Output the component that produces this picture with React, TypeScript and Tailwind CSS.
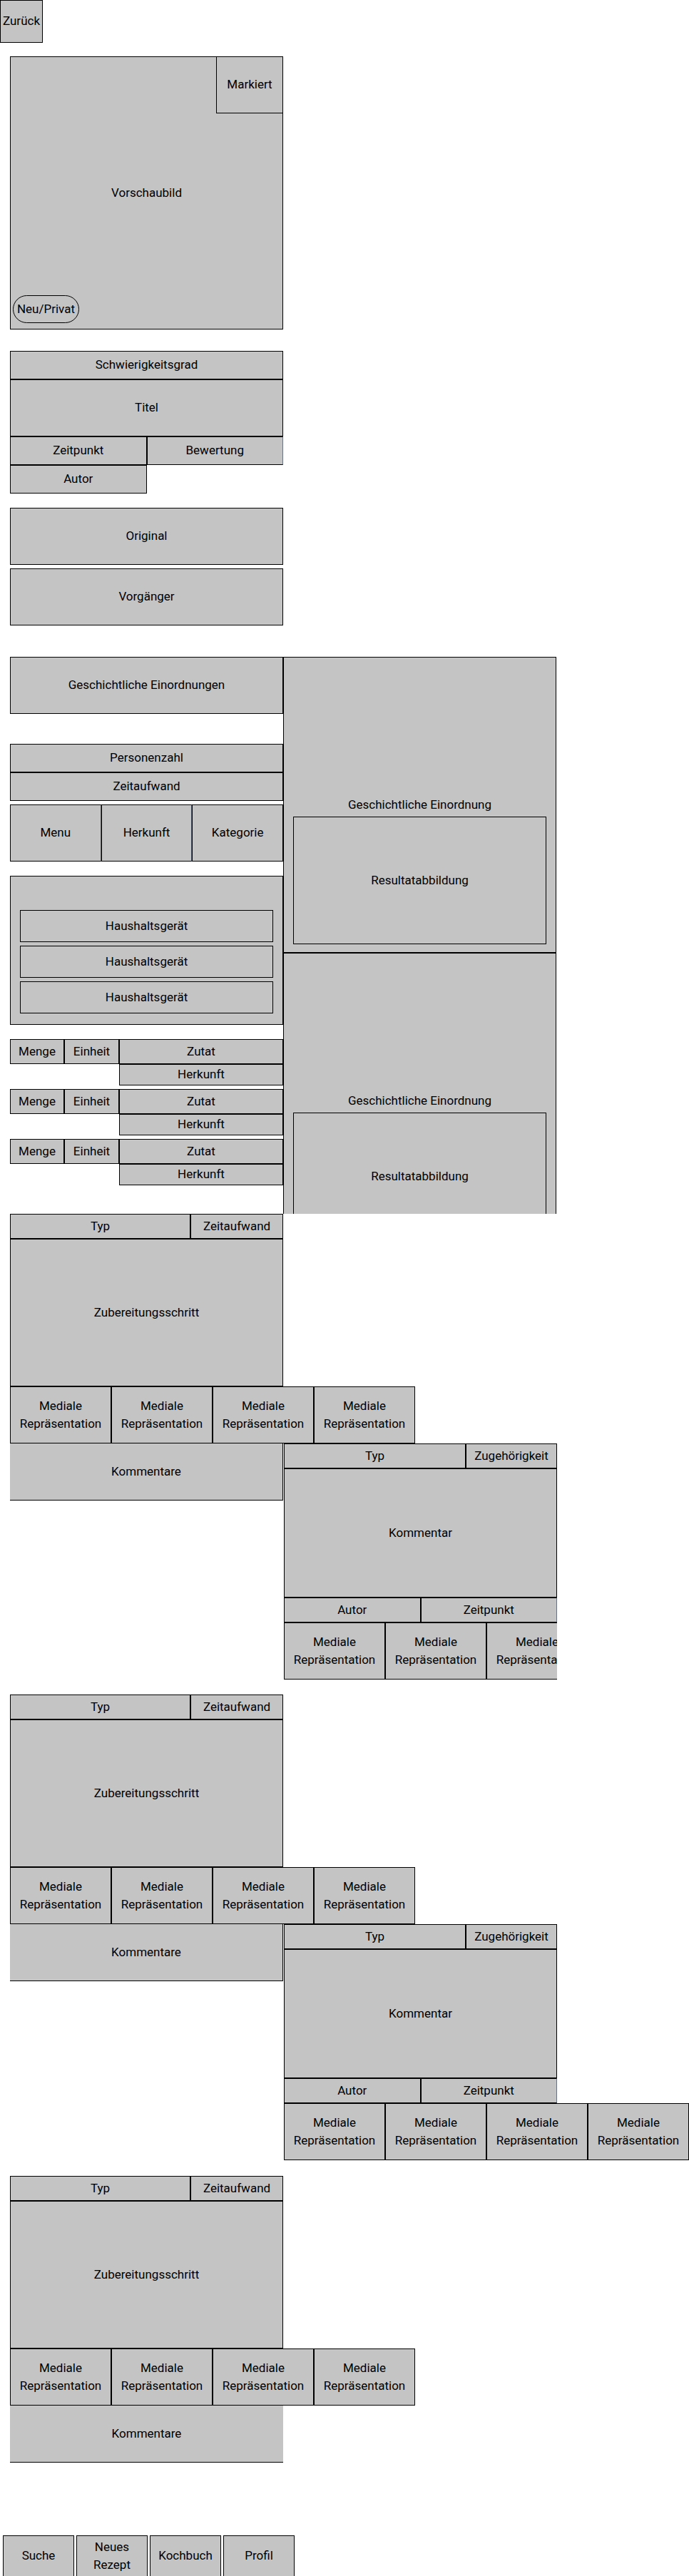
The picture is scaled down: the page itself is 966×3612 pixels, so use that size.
import type { ReactNode } from "react";
import clsx from "clsx";

// Plain grey wireframe cell with a black hairline border
function Box({ className, children }: { className?: string; children?: ReactNode }) {
  return (
    <div
      className={clsx(
        "flex shrink-0 items-center justify-center border border-black bg-[#c4c4c4] text-center",
        className
      )}
    >
      {children}
    </div>
  );
}

function Media() {
  return (
    <Box className="h-[80px] w-[142px]">
      Mediale
      <br />
      Repräsentation
    </Box>
  );
}

function MediaRow() {
  return (
    <div className="flex">
      <Media />
      <Media />
      <Media />
      <Media />
    </div>
  );
}

function History() {
  return (
    <div className="flex h-[415px] w-[383px] flex-col items-center justify-end border border-black bg-[#c4c4c4] px-[13px] pb-[11px]">
      <span className="leading-5">Geschichtliche Einordnung</span>
      <Box className="mt-[7px] h-[179px] w-full">Resultatabbildung</Box>
    </div>
  );
}

function Ingredient() {
  return (
    <div className="flex">
      <Box className="h-[35px] w-[76px]">Menge</Box>
      <Box className="h-[35px] w-[77px]">Einheit</Box>
      <div className="flex w-[230px] flex-col">
        <Box className="h-[35px]">Zutat</Box>
        <Box className="h-[30px]">Herkunft</Box>
      </div>
    </div>
  );
}

function Comment({ clip }: { clip?: boolean }) {
  return (
    <div className={clsx("ml-px w-[383px] shrink-0", clip && "overflow-hidden")}>
      <div className="flex">
        <Box className="h-[35px] w-[255px]">Typ</Box>
        <Box className="h-[35px] flex-1">Zugehörigkeit</Box>
      </div>
      <Box className="h-[181px]">Kommentar</Box>
      <div className="flex">
        <Box className="h-[35px] w-1/2">Autor</Box>
        <Box className="h-[35px] w-1/2 border-r-gray-500">Zeitpunkt</Box>
      </div>
      <MediaRow />
    </div>
  );
}

function Step({ comment, clip }: { comment?: boolean; clip?: boolean }) {
  return (
    <div>
      <div className="w-[383px]">
        <div className="flex">
          <Box className="h-[35px] w-[253px]">Typ</Box>
          <Box className="h-[35px] flex-1">Zeitaufwand</Box>
        </div>
        <Box className="h-[207px]">Zubereitungsschritt</Box>
      </div>
      <MediaRow />
      <div className="flex items-start">
        <Box className={clsx("h-[80px] w-[383px] border-l-0 border-t-0", !comment && "border-r-0")}>
          Kommentare
        </Box>
        {comment && <Comment clip={clip} />}
      </div>
    </div>
  );
}

export default function App() {
  return (
    <div className="min-h-[3612px] overflow-hidden bg-white font-['Roboto',sans-serif] text-[17px] text-black">
      <Box className="h-[60px] w-[60px]">Zurück</Box>

      <div className="px-[14px]">
        {/* Preview */}
        <div className="relative mt-[19px] flex h-[383px] w-[383px] items-center justify-center border border-black bg-[#c4c4c4]">
          Vorschaubild
          <Box className="absolute -right-px -top-px h-[80px] w-[94px]">Markiert</Box>
          <div className="absolute bottom-[8px] left-[3px] flex h-[39px] w-[93px] items-center justify-center rounded-full border border-black">
            Neu/Privat
          </div>
        </div>

        {/* Meta */}
        <div className="mt-[30px] w-[383px]">
          <Box className="h-[40px]">Schwierigkeitsgrad</Box>
          <Box className="h-[80px]">Titel</Box>
          <div className="flex">
            <Box className="h-[40px] w-1/2">Zeitpunkt</Box>
            <Box className="h-[40px] w-1/2 border-r-gray-500">Bewertung</Box>
          </div>
          <Box className="h-[40px] w-1/2">Autor</Box>
        </div>

        <div className="mt-[20px] w-[383px]">
          <Box className="h-[80px]">Original</Box>
          <Box className="mt-[5px] h-[80px]">Vorgänger</Box>
        </div>

        {/* Details + history column */}
        <div className="mt-[44px] flex items-start">
          <div className="flex w-[383px] shrink-0 flex-col">
            <Box className="h-[80px]">Geschichtliche Einordnungen</Box>
            <Box className="mt-[42px] h-[40px]">Personenzahl</Box>
            <Box className="h-[40px]">Zeitaufwand</Box>
            <div className="mt-[5px] flex">
              <Box className="h-[80px] flex-1 border-r-gray-600">Menu</Box>
              <Box className="h-[80px] flex-1 border-r-gray-600">Herkunft</Box>
              <Box className="h-[80px] flex-1">Kategorie</Box>
            </div>
            <div className="mt-[20px] flex h-[209px] flex-col gap-[5px] border border-black bg-[#c4c4c4] px-[13px] pt-[47px]">
              <Box className="h-[45px]">Haushaltsgerät</Box>
              <Box className="h-[45px]">Haushaltsgerät</Box>
              <Box className="h-[45px]">Haushaltsgerät</Box>
            </div>
            <div className="mt-[20px] flex flex-col gap-[5px]">
              <Ingredient />
              <Ingredient />
              <Ingredient />
            </div>
          </div>
          <div className="h-[781px] w-[383px] shrink-0 overflow-hidden">
            <History />
            <History />
          </div>
        </div>

        {/* Steps */}
        <Step comment clip />
        <div className="mt-[21px]">
          <Step comment />
        </div>
        <div className="mt-[22px]">
          <Step />
        </div>
      </div>

      {/* Bottom navigation */}
      <nav className="ml-[4px] mt-[102px] flex gap-[3px]">
        <Box className="h-[58px] w-[100px]">Suche</Box>
        <Box className="h-[58px] w-[100px]">
          Neues
          <br />
          Rezept
        </Box>
        <Box className="h-[58px] w-[100px]">Kochbuch</Box>
        <Box className="h-[58px] w-[100px]">Profil</Box>
      </nav>
    </div>
  );
}
